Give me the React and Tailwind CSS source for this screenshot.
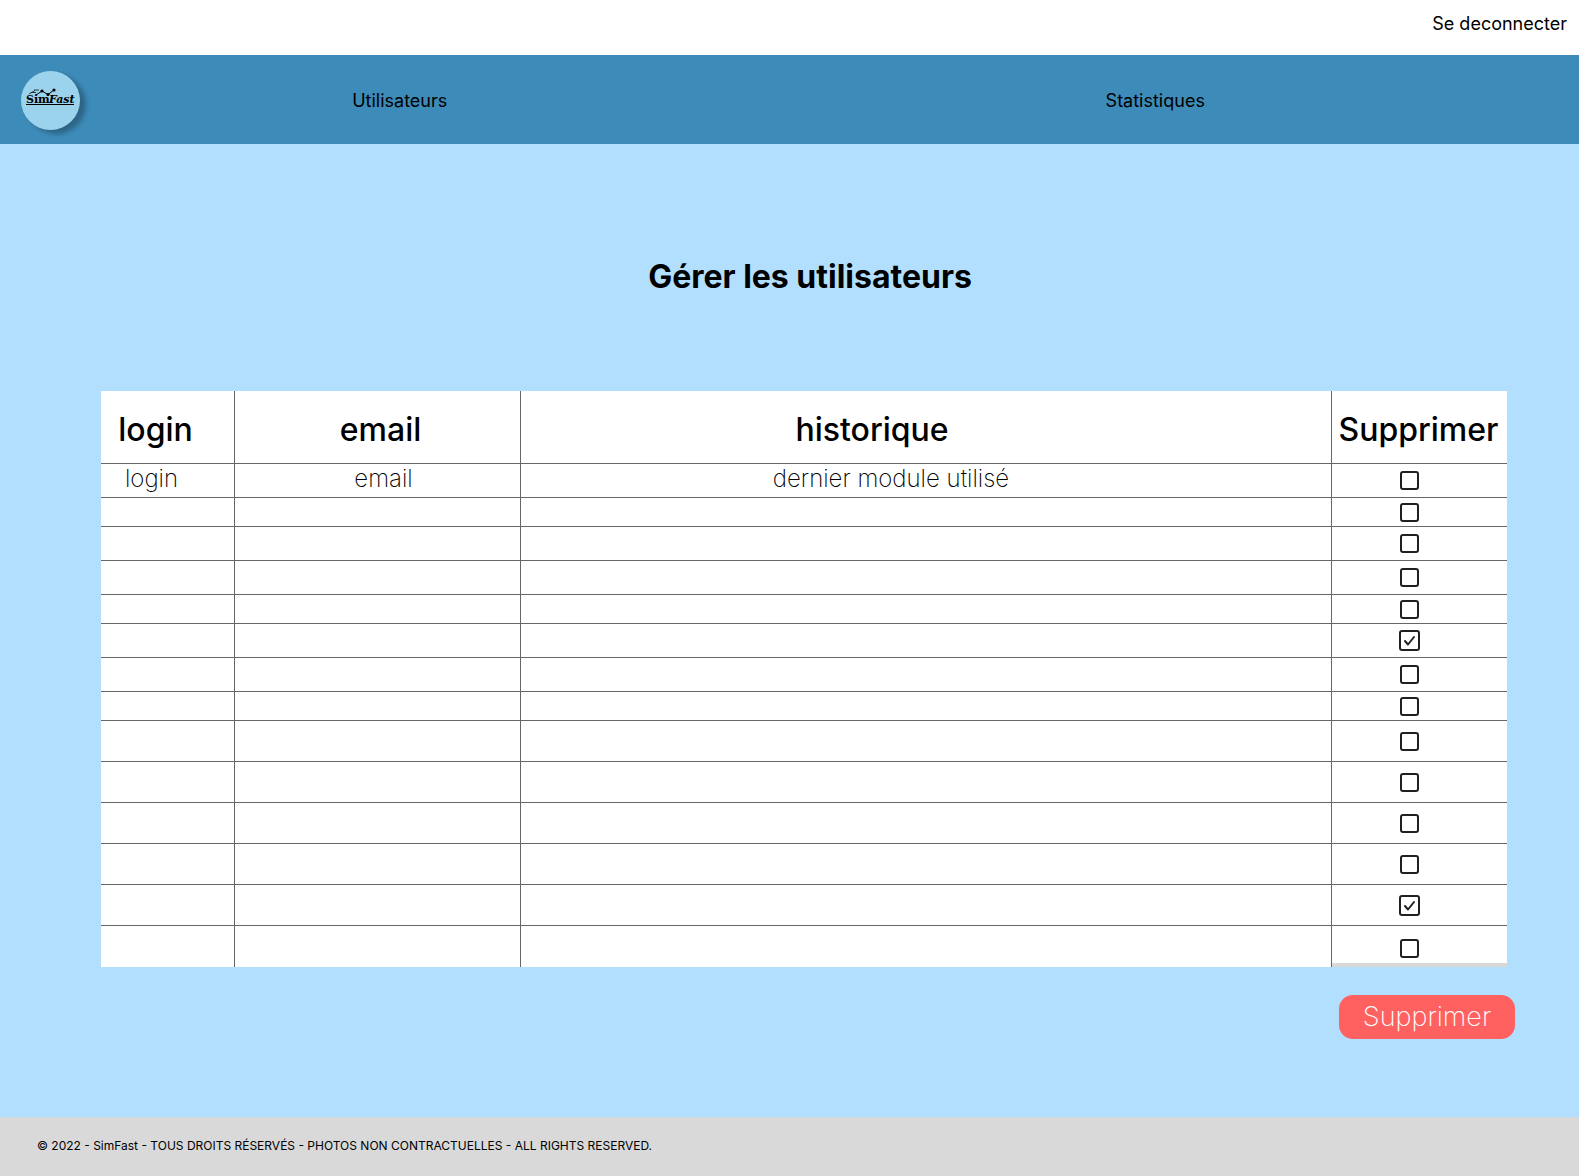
const ROWS = [
  { h: "h-[34px]", login: "login", email: "email", historique: "dernier module utilisé" },
  { h: "h-[29px]" },
  { h: "h-[34px]" },
  { h: "h-[34px]" },
  { h: "h-[29px]" },
  { h: "h-[34px]", checked: true },
  { h: "h-[34px]" },
  { h: "h-[29px]" },
  { h: "h-[41px]" },
  { h: "h-[41px]" },
  { h: "h-[41px]" },
  { h: "h-[41px]" },
  { h: "h-[41px]", checked: true },
  { h: "h-[41px]" },
];

function Logo() {
  return (
    <a
      href="#"
      aria-label="SimFast"
      className="block size-[59px] shrink-0 rounded-full bg-[#9bd3ec] shadow-[6px_4px_5px_rgba(0,0,0,0.28)]"
    >
      <svg viewBox="0 0 59 59" className="size-full" aria-hidden="true">
        <g fill="none" stroke="#000" strokeWidth="1">
          <path d="M15 24 L21 20 L27 23.500 L33 19" />
          <path d="M8 23 L14 19.500 M10 21.500 L15 21.500 M13 19 L18 19" strokeWidth="0.700" />
        </g>
        <circle cx="21" cy="20" r="1.600" />
        <circle cx="27" cy="23.500" r="1.600" />
        <circle cx="33" cy="19" r="1.600" />
        <g fontFamily="'DejaVu Serif', serif" fontWeight="700" fontSize="11">
          <text x="5" y="32">Sim</text>
          <text x="28" y="32" fontStyle="italic">Fast</text>
        </g>
        <path d="M5 33.500 H53" stroke="#000" strokeWidth="1" />
      </svg>
    </a>
  );
}

function Checkbox({ checked, label }) {
  return (
    <span className="relative grid place-items-center">
      <input
        type="checkbox"
        defaultChecked={checked}
        aria-label={label}
        className="peer size-[19px] appearance-none rounded-[3px] border-2 border-[#231f20] bg-white checked:size-[21px]"
      />
      <svg
        viewBox="0 0 21 21"
        className="pointer-events-none absolute hidden size-[21px] peer-checked:block"
        fill="none"
        stroke="#231f20"
        strokeWidth="2"
        strokeLinecap="round"
        strokeLinejoin="round"
        aria-hidden="true"
      >
        <path d="M6 11 L9 14.500 L15 7" />
      </svg>
    </span>
  );
}

export default function App() {
  return (
    <div className="flex min-h-screen flex-col bg-[#b3dfff] font-['Inter',sans-serif] text-black">
      <div className="flex h-[55px] justify-end bg-white px-3 pt-2.5">
        <a href="#" className="text-lg">Se deconnecter</a>
      </div>

      <nav className="flex h-[89px] items-center bg-[#3d8bb9] pt-0.5 pl-[21px] text-lg">
        <Logo />
        <div className="grid flex-1 grid-cols-2 text-center">
          <a href="#" className="justify-self-center pr-[110px]">Utilisateurs</a>
          <a href="#" className="justify-self-center pr-[98px]">Statistiques</a>
        </div>
      </nav>

      <main className="flex-1 pr-[72px] pl-[101px]">
        <h1 className="pt-[113px] pl-3 text-center text-[32px] leading-10 font-bold">
          Gérer les utilisateurs
        </h1>

        <table className="mt-[94px] w-full table-fixed border-separate border-spacing-0 bg-white">
          <colgroup>
            <col className="w-[134px]" />
            <col className="w-[286px]" />
            <col />
            <col className="w-[175px]" />
          </colgroup>
          <thead>
            <tr className="h-[73px] text-[32px] leading-10 [&>th]:border-b [&>th]:border-[#666] [&>th]:p-0 [&>th]:pt-1.5 [&>th]:font-medium">
              <th className="border-r"><span className="pr-6">login</span></th>
              <th className="border-r"><span className="pl-1.5">email</span></th>
              <th className="border-r"><span className="pr-[108px]">historique</span></th>
              <th><span className="pr-0.5">Supprimer</span></th>
            </tr>
          </thead>
          <tbody className="text-center text-2xl leading-7 font-extralight">
            {ROWS.map((row, i) => {
              const last = i === ROWS.length - 1;
              const cell = last ? "border-r border-[#666] p-0" : "border-r border-b border-[#666] p-0 pb-1";
              return (
                <tr key={i} className={row.h}>
                  <td className={cell}><span className="block pr-8">{row.login}</span></td>
                  <td className={cell}><span className="block pl-3">{row.email}</span></td>
                  <td className={cell}><span className="block pr-[70px]">{row.historique}</span></td>
                  <td className={last ? "border-b-4 border-[#d9d9d9] p-0 pt-2 pr-5" : "border-b border-[#666] p-0 pr-5"}>
                    <Checkbox checked={row.checked} label={`Supprimer la ligne ${i + 1}`} />
                  </td>
                </tr>
              );
            })}
          </tbody>
        </table>

        <div className="-mr-2 flex justify-end pt-7">
          <button
            type="button"
            className="h-11 w-44 rounded-[14px] bg-[#ff6161] text-[27px] leading-9 font-extralight text-white"
          >
            Supprimer
          </button>
        </div>
      </main>

      <footer className="flex h-[59px] items-center bg-[#d9d9d9] px-[37px] pb-0.5 text-xs">
        <p>© 2022 - SimFast - TOUS DROITS RÉSERVÉS - PHOTOS NON CONTRACTUELLES - ALL RIGHTS RESERVED.</p>
      </footer>
    </div>
  );
}
